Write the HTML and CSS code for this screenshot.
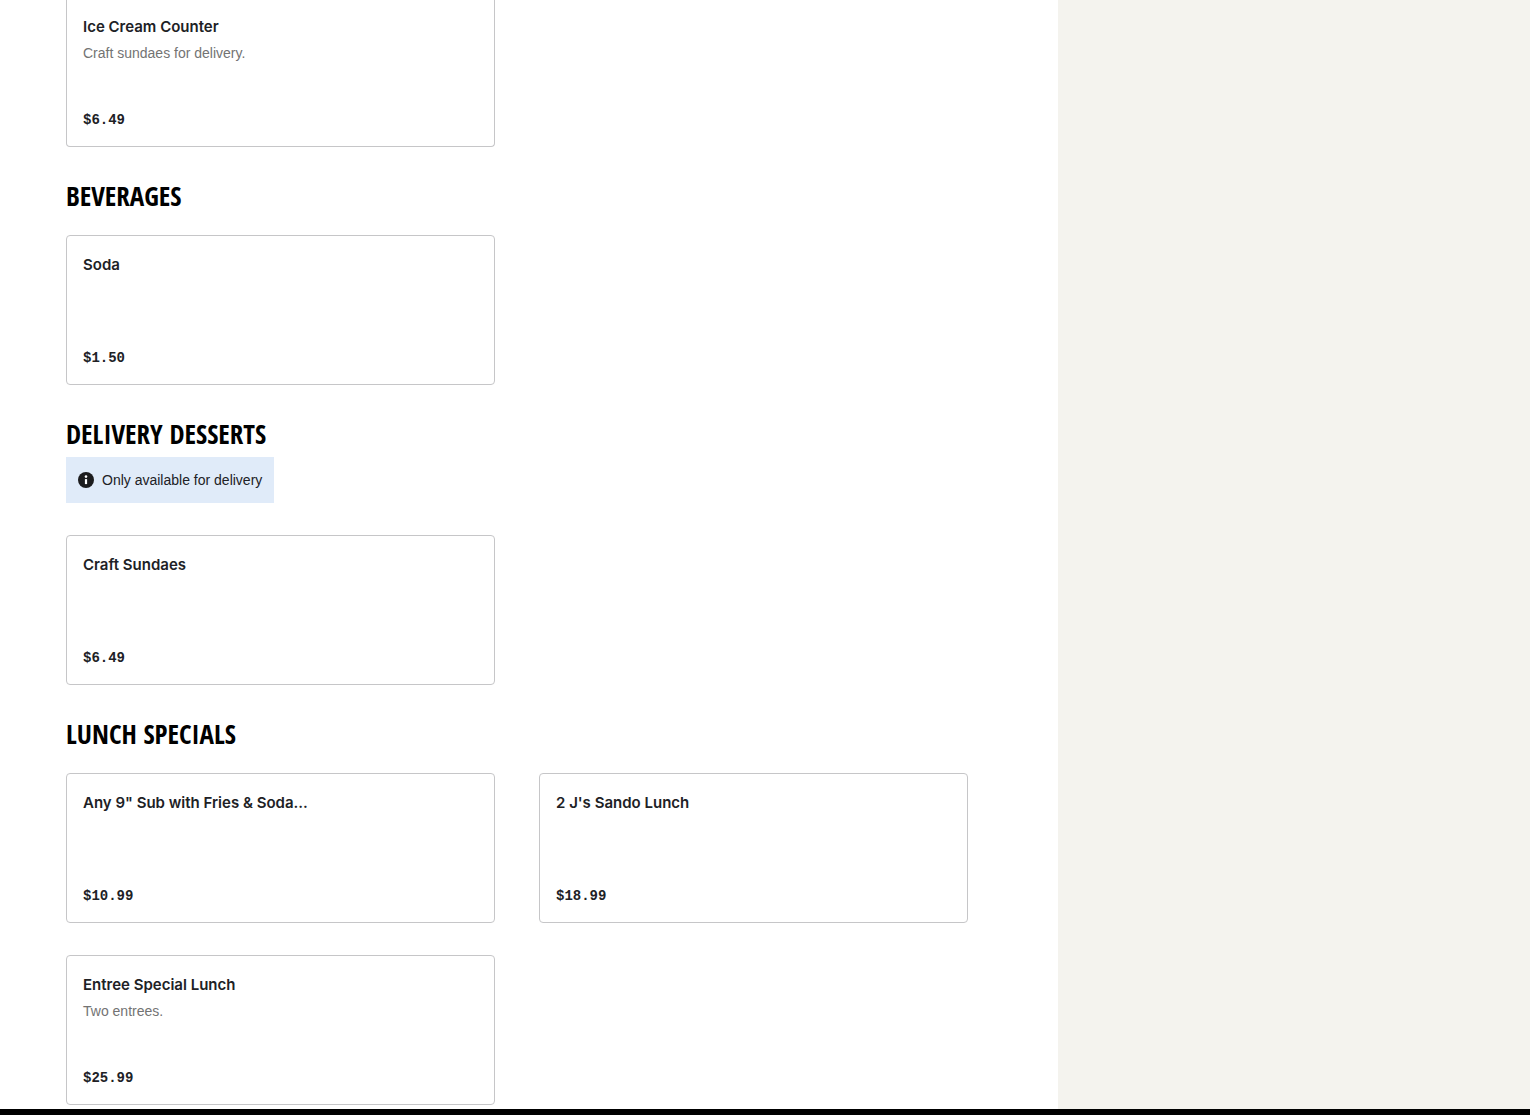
FILE: index.html
```html
<!DOCTYPE html>
<html lang="en">
<head>
    <meta charset="UTF-8">
    <meta name="viewport" content="width=device-width, initial-scale=1.0">
    <title>Menu</title>
    <link rel="stylesheet" href="styles.css">
</head>
<body>
    <div class="page">
        <main class="menu">
            <section class="menu-group">
                <div class="items">
                    <a class="item item-continued" href="#ice-cream-counter">
                        <h3 class="item-name">Ice Cream Counter</h3>
                        <p class="item-description">Craft sundaes for delivery.</p>
                        <span class="item-price">$6.49</span>
                    </a>
                </div>
            </section>

            <!-- Beverages -->
            <section class="menu-group">
                <h2>Beverages</h2>
                <div class="items">
                    <a class="item" href="#soda">
                        <h3 class="item-name">Soda</h3>
                        <span class="item-price">$1.50</span>
                    </a>
                </div>
            </section>

            <!-- Delivery Desserts -->
            <section class="menu-group">
                <h2>Delivery Desserts</h2>
                <div class="notice">
                    <svg class="notice-icon" viewBox="0 0 16 16" aria-hidden="true">
                        <circle cx="8" cy="8" r="8" fill="#1c1c1e"/>
                        <circle cx="8" cy="4.6" r="1.3" fill="#fff"/>
                        <path d="M6.9 7.1h2.2v5H6.9z" fill="#fff"/>
                    </svg>
                    <span>Only available for delivery</span>
                </div>
                <div class="items">
                    <a class="item" href="#craft-sundaes">
                        <h3 class="item-name">Craft Sundaes</h3>
                        <span class="item-price">$6.49</span>
                    </a>
                </div>
            </section>

            <!-- Lunch Specials -->
            <section class="menu-group">
                <h2>Lunch Specials</h2>
                <div class="items">
                    <a class="item" href="#sub-fries-soda">
                        <h3 class="item-name">Any 9" Sub with Fries &amp; Soda...</h3>
                        <span class="item-price">$10.99</span>
                    </a>
                    <a class="item" href="#sando-lunch">
                        <h3 class="item-name">2 J's Sando Lunch</h3>
                        <span class="item-price">$18.99</span>
                    </a>
                    <a class="item" href="#entree-special">
                        <h3 class="item-name">Entree Special Lunch</h3>
                        <p class="item-description">Two entrees.</p>
                        <span class="item-price">$25.99</span>
                    </a>
                </div>
            </section>
        </main>
        <aside class="sidebar"></aside>
    </div>
    <footer></footer>
</body>
</html>
```
FILE: styles.css
```css
* {
    box-sizing: border-box;
    margin: 0;
    padding: 0;
}

body {
    font-family: "Liberation Sans", Arial, sans-serif;
    font-size: 14px;
    color: #202125;
    background-color: #fff;
}

.page {
    display: flex;
}

/* Menu */
.menu {
    flex: 1;
    display: flex;
    flex-direction: column;
    gap: 32px;
    padding: 0 90px 4px 66px;
}

h2 {
    font-family: "Open Sans Condensed", "Liberation Sans Narrow", sans-serif;
    font-size: 27px;
    font-weight: 700;
    line-height: 34px;
    color: #000;
    text-transform: uppercase;
    margin-bottom: 22px;
}

.items {
    display: grid;
    grid-template-columns: repeat(2, 1fr);
    gap: 32px 44px;
}

.item {
    display: flex;
    flex-direction: column;
    min-height: 150px;
    padding: 16px;
    border: 1px solid #c6c6c8;
    border-radius: 4px;
    color: inherit;
    text-decoration: none;
}

.item:hover {
    border-color: #202125;
}

/* Card that carries on from above the top edge */
.item-continued {
    min-height: 147px;
    padding-top: 14px;
    border-top: none;
    border-radius: 0 0 4px 4px;
}

.item-name {
    font-family: Inter, "Liberation Sans", sans-serif;
    font-size: 15px;
    font-weight: 600;
    line-height: 26px;
}

.item-description {
    margin-top: 2px;
    line-height: 22px;
    color: #737373;
}

.item-price {
    margin-top: auto;
    font-family: "Liberation Mono", monospace;
    font-weight: 700;
    line-height: 20px;
}

/* Notice */
.notice {
    display: flex;
    align-items: center;
    gap: 8px;
    width: fit-content;
    margin: -16px 0 32px;
    padding: 12px;
    line-height: 22px;
    background-color: #e0ebf9;
}

.notice-icon {
    width: 16px;
    height: 16px;
}

.sidebar {
    width: 472px;
    background-color: #f4f3ee;
}

footer {
    height: 6px;
    background-color: #000;
}
```
